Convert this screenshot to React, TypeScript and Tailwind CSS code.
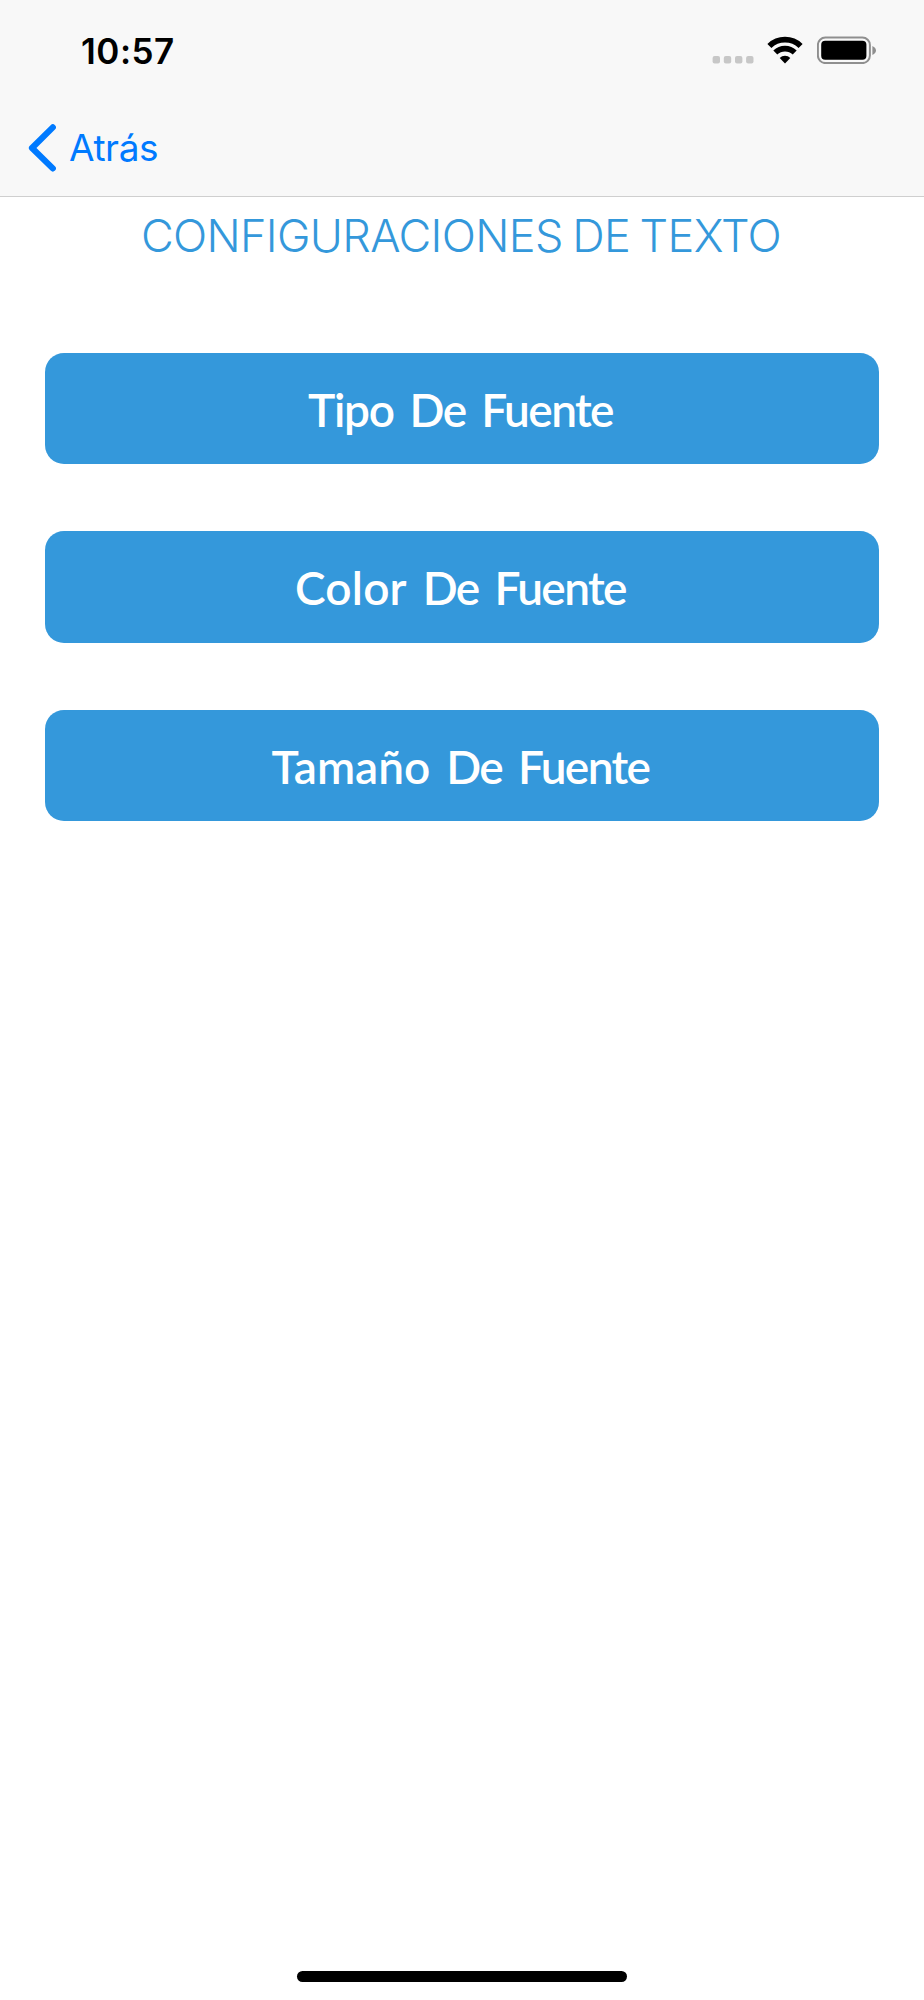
import React from 'react';

const SignalDots = () => (
  <svg width="42" height="8" viewBox="0 0 42 8" fill="#c7c7c7">
    {[0.6, 11.8, 23, 34.1].map((x) => (
      <rect key={x} x={x} y="0" width="7.4" height="7.4" rx="2" />
    ))}
  </svg>
);

const WifiIcon = () => (
  <svg width="36" height="28" viewBox="0 0 36 28" fill="none" stroke="#000">
    <path d="M2.4 10A22.5 22.5 0 0 1 33.6 10" strokeWidth="5.8" />
    <path d="M8.3 16.6A13.8 13.8 0 0 1 27.7 16.6" strokeWidth="5.6" />
    <path d="M18 27.4L12.7 21.9A7.4 7.4 0 0 1 23.3 21.9Z" fill="#000" stroke="none" />
  </svg>
);

const BatteryIcon = () => (
  <svg width="60" height="28" viewBox="0 0 60 28">
    <rect x="0.9" y="1.5" width="52" height="25.6" rx="7.5" fill="none" stroke="#8f8f8f" strokeWidth="2" />
    <rect x="4.2" y="4.8" width="45.2" height="19" rx="4" />
    <path d="M55.4 10C60.2 12 60.2 17 55.4 19Z" fill="#8f8f8f" />
  </svg>
);

const StatusBar = () => (
  <div className="h-[100px] flex items-start justify-between pl-[81px] pr-[47px]">
    <span className="mt-[26px] text-[35px] leading-[50px] font-semibold tracking-[0.5px] text-black">10:57</span>
    <div className="mt-9 flex items-start">
      <div className="mt-5 mr-[13px]">
        <SignalDots />
      </div>
      <div className="mr-[14px]">
        <WifiIcon />
      </div>
      <BatteryIcon />
    </div>
  </div>
);

const NavBar = () => (
  <button className="h-24 pl-7 flex items-center text-[#007aff]">
    <svg width="30" height="50" viewBox="0 0 30 50" fill="none" stroke="currentColor" strokeWidth="6.2" strokeLinecap="round" strokeLinejoin="round">
      <path d="M24.8 4.4L4 25L24.8 45.4" />
    </svg>
    <span className="ml-[11px] text-[37px] leading-[50px] tracking-[-0.4px]">Atrás</span>
  </button>
);

const options = [
  { name: 'Tipo', className: 'tracking-[-1.3px]' },
  { name: 'Color', className: 'tracking-[0.2px]' },
  { name: 'Tamaño', className: 'tracking-[0px]' },
];

export default function App() {
  return (
    <div className="w-[924px] h-[2000px] bg-white flex flex-col font-['Inter',sans-serif]">
      <header className="h-[197px] bg-[#f8f8f8] border-b border-[#cfcfcf]">
        <StatusBar />
        <NavBar />
      </header>

      <main className="flex-1 px-[45px]">
        <h1 className="mt-[12px] pr-[2px] text-center text-[45px] leading-[54px] font-light tracking-[-0.65px] [word-spacing:-2.5px] whitespace-nowrap text-[#3498db]">
          CONFIGURACIONES DE TEXTO
        </h1>
        <div className="mt-[89.5px] flex flex-col gap-[67px]">
          {options.map((option) => (
            <button
              key={option.name}
              className="h-[111.5px] pt-[2px] pr-[3px] rounded-[19px] bg-[#3498db] text-white text-[46px] font-semibold font-['Lato',sans-serif] tracking-[-1.6px] [word-spacing:6px]"
            >
              <span className={option.className}>{option.name}</span> De Fuente
            </button>
          ))}
        </div>
      </main>

      <footer className="flex justify-center pb-[18px]">
        <div className="w-[330px] h-[11px] rounded-full bg-black" />
      </footer>
    </div>
  );
}
